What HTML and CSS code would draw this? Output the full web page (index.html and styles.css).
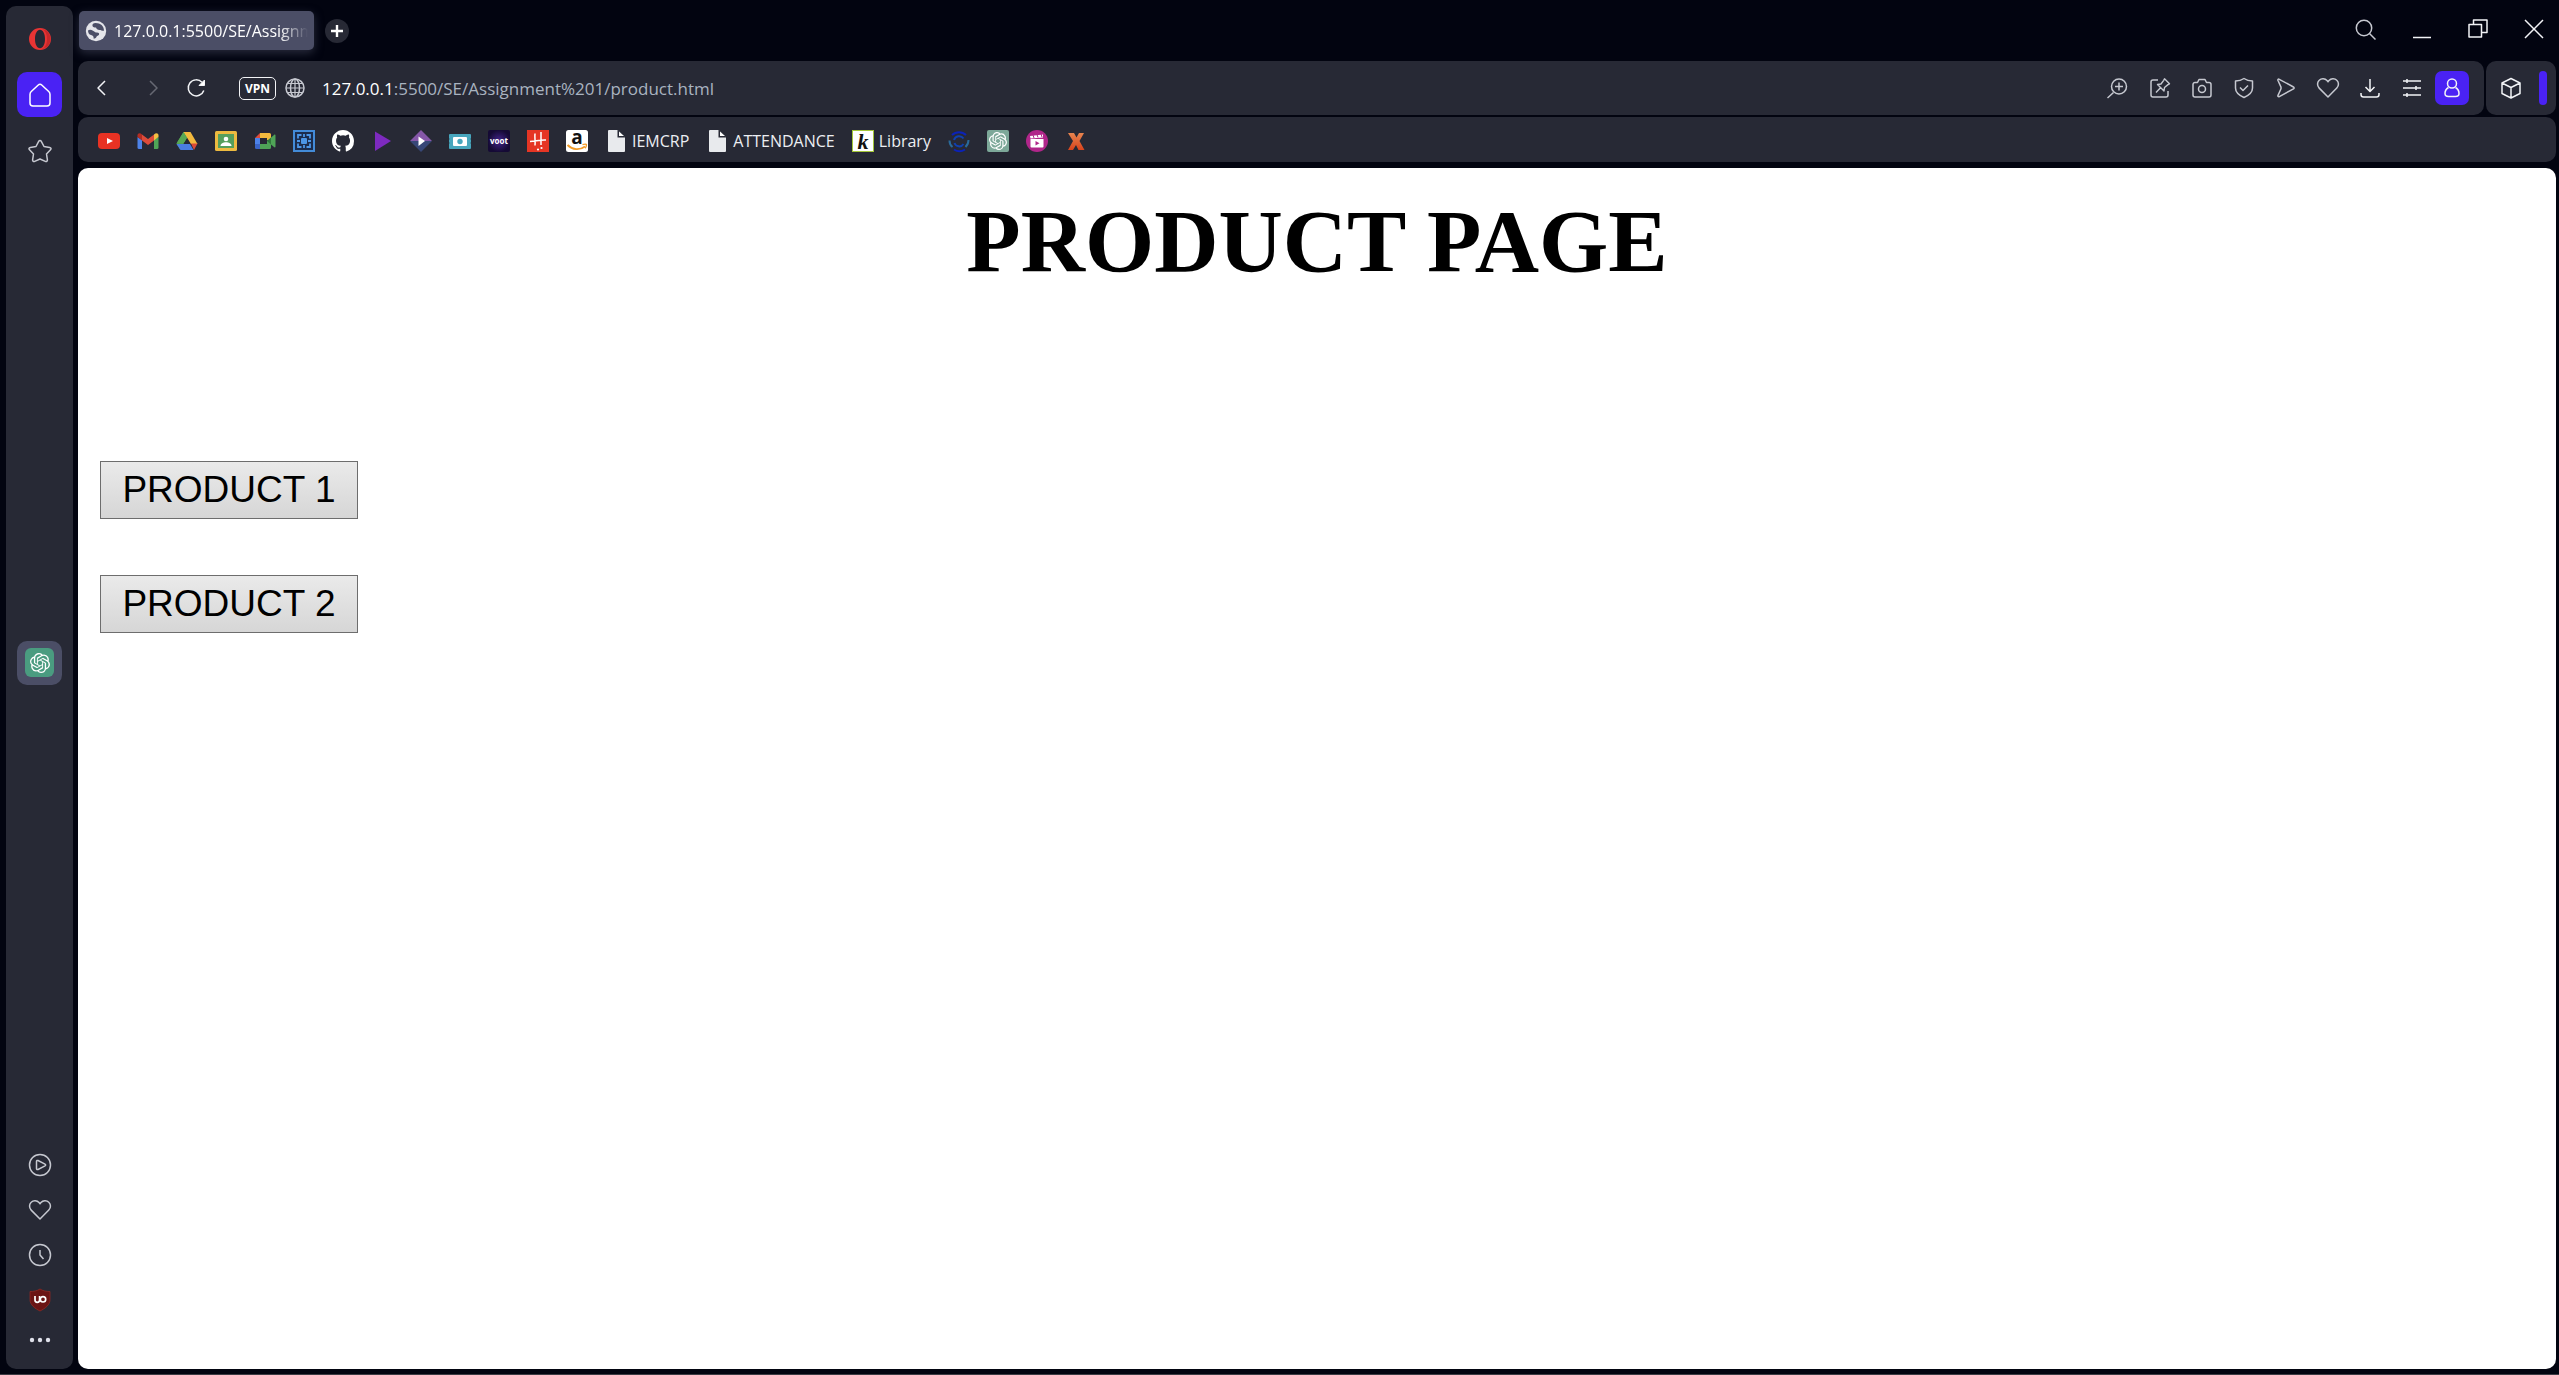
FILE: index.html
```html
<!DOCTYPE html>
<html lang="en">
<head>
<meta charset="utf-8">
<meta name="viewport" content="width=device-width, initial-scale=1">
<title>127.0.0.1:5500/SE/Assignment%201/product.html</title>
<link rel="stylesheet" href="styles.css">
</head>
<body>
<svg class="defs" aria-hidden="true">
  <defs>
    <symbol id="heart" viewBox="0 0 24 24"><path d="M12 21 3.200 12.100C1 9.800 1 6.200 3.200 4.200 5.500 2 9 2.300 11 4.600L12 5.800l1-1.200c2-2.300 5.500-2.600 7.800-.4 2.200 2 2.200 5.600 0 7.900z"/></symbol>
    <symbol id="knot" viewBox="0 0 24 24"><path fill="#fff" d="M22.2819 9.8211a5.9847 5.9847 0 0 0-.5157-4.9108 6.0462 6.0462 0 0 0-6.5098-2.9A6.0651 6.0651 0 0 0 4.9807 4.1818a5.9847 5.9847 0 0 0-3.9977 2.9 6.0462 6.0462 0 0 0 .7427 7.0966 5.98 5.98 0 0 0 .511 4.9107 6.051 6.051 0 0 0 6.5146 2.9001A5.9847 5.9847 0 0 0 13.2599 24a6.0557 6.0557 0 0 0 5.7718-4.2058 5.9894 5.9894 0 0 0 3.9977-2.9001 6.0557 6.0557 0 0 0-.7475-7.0729zm-9.022 12.6081a4.4755 4.4755 0 0 1-2.8764-1.0408l.1419-.0804 4.7783-2.7582a.7948.7948 0 0 0 .3927-.6813v-6.7369l2.02 1.1686a.071.071 0 0 1 .038.052v5.5826a4.504 4.504 0 0 1-4.4945 4.4944zm-9.6607-4.1254a4.4708 4.4708 0 0 1-.5346-3.0137l.142.0852 4.783 2.7582a.7712.7712 0 0 0 .7806 0l5.8428-3.3685v2.3324a.0804.0804 0 0 1-.0332.0615L9.74 19.9502a4.4992 4.4992 0 0 1-6.1408-1.6464zM2.3408 7.8956a4.485 4.485 0 0 1 2.3655-1.9728V11.6a.7664.7664 0 0 0 .3879.6765l5.8144 3.3543-2.0201 1.1685a.0757.0757 0 0 1-.071 0l-4.8303-2.7865A4.504 4.504 0 0 1 2.3408 7.872zm16.5963 3.8558L13.1038 8.364 15.1192 7.2a.0757.0757 0 0 1 .071 0l4.8303 2.7913a4.4944 4.4944 0 0 1-.6765 8.1042v-5.6772a.79.79 0 0 0-.407-.667zm2.0107-3.0231l-.142-.0852-4.7735-2.7818a.7759.7759 0 0 0-.7854 0L9.409 9.2297V6.8974a.0662.0662 0 0 1 .0284-.0615l4.8303-2.7866a4.4992 4.4992 0 0 1 6.6802 4.66zM8.3065 12.863l-2.02-1.1638a.0804.0804 0 0 1-.038-.0567V6.0742a4.4992 4.4992 0 0 1 7.3757-3.4537l-.142.0805L8.704 5.459a.7948.7948 0 0 0-.3927.6813zm1.0976-2.3654l2.602-1.4998 2.6069 1.4998v2.9994l-2.5974 1.4997-2.6067-1.4997Z"/></symbol>
    <symbol id="file" viewBox="0 0 22 22"><path d="M4 0h9l7 7v14a1 1 0 0 1-1 1H4a1 1 0 0 1-1-1V1a1 1 0 0 1 1-1z" fill="#e8eaed"/><path d="M12.500 0v7.500H20V6.500L13.500 0z" fill="#272935"/><path d="M14 1.500V6h5z" fill="#fff"/></symbol>
  </defs>
</svg>
<nav class="sidebar" aria-label="Sidebar">
  <div class="side-group">
    <button class="side-btn" aria-label="Opera menu"><svg class="ic22" viewBox="0 0 22 22"><path fill="#e93434" fill-rule="evenodd" d="M11 0a11 11 0 1 0 0 22 11 11 0 0 0 0-22zm0 1.800c3 0 5 4 5 9.200s-2 9.200-5 9.200-5-4-5-9.200 2-9.200 5-9.200z"/><path fill="#a81c22" d="M13 1c6 1 8.500 6 8.500 10S19 20 13 21c4-2 5-6 5-10s-1-8-5-10z" opacity=".5"/></svg></button>
    <button class="side-btn active" aria-label="Home"><svg class="ic26 line" viewBox="0 0 26 26"><path d="M3 12.500a4 4 0 0 1 1.300-3L11 3.200a3 3 0 0 1 4 0l6.700 6.300a4 4 0 0 1 1.300 3V21a3 3 0 0 1-3 3H6a3 3 0 0 1-3-3z"/></svg></button>
    <button class="side-btn" aria-label="Pinboards"><svg class="ic24 line" viewBox="0 0 24 24"><path d="M10.700 2.300c.6-1.100 2-1.100 2.600 0L16 7.500l5.700.9c1.300.2 1.700 1.500.8 2.400l-4 4.200.9 5.900c.1 1.200-1 2-2.100 1.500L12 20l-5.300 2.400c-1.100.5-2.200-.3-2.100-1.500l.9-5.900-4-4.200c-.9-.9-.5-2.200.8-2.400L8 7.500z"/></svg></button>
  </div>
  <button class="side-btn gpt" aria-label="ChatGPT"><span class="gpt-tile"><svg class="ic20"><use href="#knot"/></svg></span></button>
  <div class="side-group bottom">
    <button class="side-btn" aria-label="Player"><svg class="ic24 line" viewBox="0 0 24 24"><circle cx="12" cy="12" r="10.500"/><path d="M8.500 8.500c0-1 .8-1.300 1.500-1l7 3.600c.9.500.9 1.300 0 1.800l-7 3.600c-.7.300-1.500 0-1.500-1z"/></svg></button>
    <button class="side-btn" aria-label="Favourites"><svg class="ic24 line"><use href="#heart"/></svg></button>
    <button class="side-btn" aria-label="History"><svg class="ic24 line" viewBox="0 0 24 24"><circle cx="12" cy="12" r="10.500"/><path d="M12 7v5l3.500 4"/></svg></button>
    <button class="side-btn" aria-label="uBlock"><svg class="ic24" viewBox="0 0 24 24"><path fill="#6b1414" stroke="#9a2a22" stroke-width=".7" d="M12 1c3 2 6.500 2.500 10 2.500v8C22 17 17 20.500 12 23 7 20.500 2 17 2 11.500v-8C5.500 3.500 9 3 12 1z"/><g fill="none" stroke="#fff" stroke-width="1.700"><path d="M7 8v4a2.300 2.300 0 0 0 4.600 0V8"/><circle cx="15" cy="11.300" r="2.700"/></g></svg></button>
    <button class="side-btn more" aria-label="More"><svg class="ic24" viewBox="0 0 24 24"><g fill="#dfe1ea"><circle cx="4" cy="12" r="2.200"/><circle cx="12" cy="12" r="2.200"/><circle cx="20" cy="12" r="2.200"/></g></svg></button>
  </div>
</nav>
<div class="main">
  <header class="tabs">
    <button class="tab"><svg class="ic22" viewBox="0 0 22 22"><circle cx="11" cy="11" r="10.200" fill="#e4e5ea"/><path fill="#4b4e66" d="M10.500 3c-2 0-3.500 1.200-3 3 .4 1.500 2 1.500 3.500 1.500.5 1.500 1.500 2.500 3.500 2.500 1.500 0 2 .8 4.500.8C19 6 15.500 3 10.500 3zM3 10.500c1-.8 3-1 5 .2s2 1.800 4 1.800c1.500 0 2.500.8 2 2.200-.5 1-2 .8-2.500 2-.3 1-1.500 2-3 1.800.5-2-.5-3-2.500-3.500C4 14.500 3 12.800 3 10.500z"/></svg><span class="tab-title">127.0.0.1:5500/SE/Assignm</span></button>
    <button class="new-tab" aria-label="New tab"><svg class="ic12" viewBox="0 0 12 12"><path d="M6 0v12M0 6h12" stroke="#fff" stroke-width="2.400"/></svg></button>
    <div class="window-controls">
      <button aria-label="Search tabs"><svg class="ic22 line" viewBox="0 0 22 22"><circle cx="9" cy="10" r="7.700"/><path d="m14.500 15.500 6 6"/></svg></button>
      <button aria-label="Minimize"><svg class="ic22 line bright" viewBox="0 0 22 22"><path d="M2 19.500h18"/></svg></button>
      <button aria-label="Restore"><svg class="ic22 line bright" viewBox="0 0 22 22"><path d="M2 6.500h12.500V19H2zM6.500 6V2H20v12.500h-5"/></svg></button>
      <button aria-label="Close"><svg class="ic22 line bright" viewBox="0 0 22 22"><path d="m2 2 18 18M20 2 2 20"/></svg></button>
    </div>
  </header>
  <div class="toolbar">
    <div class="address-bar">
      <button class="nav-btn" aria-label="Back"><svg class="ic22 line bright" viewBox="0 0 22 22"><path d="M14 4 7 11l7 7"/></svg></button>
      <button class="nav-btn fwd" aria-label="Forward"><svg class="ic22 line" viewBox="0 0 22 22"><path d="m8 4 7 7-7 7"/></svg></button>
      <button class="nav-btn reload" aria-label="Reload"><svg class="ic22 line bright" viewBox="0 0 22 22"><path d="M18.800 13.500A8 8 0 1 1 17 5.300"/><path d="M19.500 3v5.500H14z" fill="#fff" stroke-width="1"/></svg></button>
      <button class="vpn">VPN</button>
      <svg class="ic22 line" viewBox="0 0 22 22"><circle cx="11" cy="11" r="9"/><ellipse cx="11" cy="11" rx="4.500" ry="9"/><path d="M2 11h18M3.500 6.500h15M3.500 15.500h15M11 2v18" stroke-width="1.200"/></svg>
      <div class="url" role="textbox" aria-label="Address" tabindex="0"><span class="host">127.0.0.1</span>:5500/SE/Assignment%201/product.html</div>
      <div class="actions">
        <button aria-label="Zoom"><svg class="ic22 line" viewBox="0 0 22 22"><circle cx="12" cy="9.500" r="7.500"/><path d="M12 5.500v8M8 9.500h8M6.500 15.500.5 21"/></svg></button>
        <button aria-label="Edit page"><svg class="ic22 line" viewBox="0 0 22 22"><path d="M9 3H4a2 2 0 0 0-2 2v13a2 2 0 0 0 2 2h13a2 2 0 0 0 2-2v-4"/><path d="m15.500 1.800 5 5-1.500.8-3.500 2.900-.5 3.500-6.500-6.500 3.500-.5 2.700-3.700zM11.500 10.800 7 15.500" stroke-width="1.400"/></svg></button>
        <button aria-label="Snapshot"><svg class="ic22 line" viewBox="0 0 22 22"><path d="M4 5.500h2.500L8 2.500h6l1.500 3H18a2 2 0 0 1 2 2V18a2 2 0 0 1-2 2H4a2 2 0 0 1-2-2V7.500a2 2 0 0 1 2-2z"/><circle cx="11" cy="12" r="3.500"/></svg></button>
        <button aria-label="Protection"><svg class="ic22 line" viewBox="0 0 22 22"><path d="M11 1.500c2.500 1.800 5 2.500 8.500 2.500v7c0 4.500-4 7.500-8.500 9.500-4.500-2-8.500-5-8.500-9.500V4C6 4 8.500 3.300 11 1.500z"/><path d="m7 10.500 3 3 5-5"/></svg></button>
        <button aria-label="My Flow"><svg class="ic22 line" viewBox="0 0 22 22"><path d="M3 3.500c-.4-1 .3-1.700 1.300-1.200L18.500 10c.8.400.8 1.400 0 1.800L4.300 19.600c-1 .5-1.700-.2-1.300-1.200l3-6.600v-1.700z"/></svg></button>
        <button aria-label="Bookmark"><svg class="ic24 line"><use href="#heart"/></svg></button>
        <button aria-label="Downloads"><svg class="ic22 line bright" viewBox="0 0 22 22"><path d="M11 2v12M6.500 10l4.500 4.500 4.500-4.500M2 16v1.500A2.500 2.500 0 0 0 4.500 20h13a2.500 2.500 0 0 0 2.500-2.500V16"/></svg></button>
        <button aria-label="Easy setup"><svg class="ic22 line bright" viewBox="0 0 22 22"><path d="M2 4h18M2 11h18M2 18h18M6 2v4M15 9v4M6 16v4"/></svg></button>
        <button class="profile" aria-label="Profile"><svg class="ic22 line bright" viewBox="0 0 22 22"><circle cx="11" cy="6.500" r="4.500"/><path d="M7.500 10.500C5 12 4 14 4 16.500c0 2 1.500 3 3.500 3h7c2 0 3.500-1 3.500-3 0-2.500-1-4.500-3.500-6"/></svg></button>
      </div>
    </div>
    <div class="extensions">
      <button aria-label="Extensions"><svg class="ic22 line bright" viewBox="0 0 22 22"><path d="m11 1.500 9 4.500v10.500l-9 4.500-9-4.500V6zM2 6l9 4.500L20 6M11 10.500V21"/></svg></button>
      <span class="accent"></span>
    </div>
  </div>
  <nav class="bookmarks" aria-label="Bookmarks">
    <a href="#" aria-label="YouTube"><svg viewBox="0 0 22 22"><rect y="3" width="22" height="16" rx="4" fill="#e93223"/><path d="m9 8 6 3-6 3z" fill="#fff"/></svg></a>
    <a href="#" aria-label="Gmail"><svg viewBox="0 0 22 22"><path fill="#4d82e8" d="M.5 7 5 10v9H2a1.500 1.500 0 0 1-1.500-1.500z"/><path fill="#4fa457" d="M21.500 7 17 10v9h3a1.500 1.500 0 0 0 1.500-1.500z"/><path fill="#dd4b3a" d="M5 4.500 11 9l6-4.500v6L11 15l-6-4.500z"/><path fill="#b32d22" d="M.5 5.500C.5 3.300 3 2.500 5 4.500v6L.5 7z"/><path fill="#f4bf42" d="M21.500 5.500c0-2.200-2.500-3-4.500-1v6L21.500 7z"/></svg></a>
    <a href="#" aria-label="Drive"><svg viewBox="0 0 22 22"><path fill="#4d9e4d" d="M7.500 2h4L13 4.500 4 19.500.5 13.500z"/><path fill="#f3b93d" d="M7.500 2h7L21.500 14H15z"/><path fill="#58a854" d="M7.500 2 11 8l-3.500 5.500H.5z"/><path fill="#4a7de0" d="M4 14h10l3.500 6H4.500L.5 14z"/><path fill="#db4a38" d="M15 13.500h6.500L18 20z"/><path fill="#272935" d="m11 8.500 3.200 5.500H7.800z"/></svg></a>
    <a href="#" aria-label="Classroom"><svg viewBox="0 0 22 22"><rect y="1" width="22" height="20" rx="1.500" fill="#edba40"/><rect x="3" y="4" width="16" height="14" fill="#569f5c"/><circle cx="11" cy="9" r="2.300" fill="#fff"/><path d="M5.500 16c0-5 11-5 11 0z" fill="#fff"/></svg></a>
    <a href="#" aria-label="Meet"><svg viewBox="0 0 22 22"><path fill="#dd4b3a" d="M6 3v5H1z"/><path fill="#4d82e8" d="M1 8h5v6H1z"/><path fill="#3a64c8" d="M1 14h5v5H2.500A1.500 1.500 0 0 1 1 17.500z"/><path fill="#f3bb3e" d="M6 3h9.500A1.500 1.500 0 0 1 17 4.500V11l-4-1V8H6z"/><path fill="#4fa457" d="M6 14h7v-3l7-6c1-.8 1.500-.4 1.500.5v11c0 1-.7 1.300-1.500.5l-3-2.500v3a1.500 1.500 0 0 1-1.500 1.500H6z"/><path fill="#2f7a3a" d="m13 11 4-3.500v7z"/></svg></a>
    <a href="#" aria-label="Scanner"><svg viewBox="0 0 22 22"><rect width="22" height="22" fill="#438bd8"/><rect x="2" y="2" width="18" height="18" fill="#1c2c4c"/><g fill="none" stroke="#4c96e6" stroke-width="1.800"><path d="M5 8.500V5h3.500M13.500 5H17v3.500M17 13.500V17h-3.500M8.500 17H5v-3.500M11 4v3M11 15v3M4 11h3M15 11h3"/></g><rect x="8" y="8" width="6" height="6" rx="1" fill="#4c96e6"/></svg></a>
    <a href="#" aria-label="GitHub"><svg viewBox="0 0 16 16"><path fill="#fff" d="M8 0C3.580 0 0 3.580 0 8c0 3.540 2.290 6.530 5.470 7.590.4.070.55-.17.55-.38v-1.490c-2.010.37-2.530-.49-2.690-.94-.09-.23-.48-.94-.82-1.130-.28-.15-.68-.52-.01-.53.630-.01 1.080.58 1.230.82.72 1.210 1.870.87 2.330.66.070-.52.280-.87.510-1.070-1.780-.2-3.640-.89-3.640-3.950 0-.87.310-1.590.82-2.150-.08-.2-.36-1.020.08-2.120 0 0 .67-.21 2.200.82a7.600 7.600 0 0 1 4 0c1.530-1.040 2.200-.82 2.200-.82.44 1.100.16 1.920.08 2.120.51.560.82 1.270.82 2.150 0 3.070-1.870 3.750-3.650 3.950.29.250.54.730.54 1.480v2.200c0 .21.150.46.550.38A8 8 0 0 0 16 8c0-4.420-3.580-8-8-8z"/></svg></a>
    <a href="#" aria-label="Player"><svg viewBox="0 0 22 22"><path fill="#7d2abf" d="m4 1.500 16 9.500L4 21z"/></svg></a>
    <a href="#" aria-label="Streaming"><svg viewBox="0 0 22 22"><path fill="#8557a8" d="m11 0 11 11H0z"/><path fill="#374777" d="m11 22 11-11H0z"/><path fill="#fff" d="m8.500 6.500 6.500 4.500-6.500 5z"/></svg></a>
    <a href="#" aria-label="Tickets"><svg viewBox="0 0 22 22"><path fill="#47a6bd" d="M1 4h20a1 1 0 0 1 1 1v3a1.500 1.500 0 0 0 0 2v2a1.500 1.500 0 0 0 0 2v4a1 1 0 0 1-1 1H1a1 1 0 0 1-1-1v-4a1.500 1.500 0 0 0 0-2v-2a1.500 1.500 0 0 0 0-2V5a1 1 0 0 1 1-1z"/><rect x="4" y="7" width="14" height="9" rx="1" fill="#fff"/><circle cx="11" cy="11.500" r="2.700" fill="#47a6bd"/></svg></a>
    <a href="#" aria-label="Voot"><svg viewBox="0 0 22 22"><defs><radialGradient id="voot"><stop offset="0" stop-color="#43248c"/><stop offset="1" stop-color="#150a35"/></radialGradient></defs><rect width="22" height="22" rx="2" fill="url(#voot)"/><text class="t-voot" x="11" y="14">voot</text></svg></a>
    <a href="#" aria-label="Hungama"><svg viewBox="0 0 22 22"><rect width="22" height="22" fill="#e53524"/><path d="M8 3.500c-.5 4 .5 8 0 12M14 2v13M3 11.500c5 0 10-2 16-1.500" fill="none" stroke="#fff" stroke-width="1.500"/><circle cx="11" cy="19.500" r="1.100" fill="#fff"/><circle cx="14.500" cy="18" r="1.100" fill="#fff"/></svg></a>
    <a href="#" aria-label="Amazon"><svg viewBox="0 0 22 22"><rect width="22" height="22" rx="2.500" fill="#fff"/><text class="t-amazon" x="11" y="14">a</text><path d="M1.500 15c5 5 12 5.500 17.500 1.500" fill="none" stroke="#f29b27" stroke-width="1.800"/><path d="M16.500 14.700c2-.7 4-.7 4 0s-.5 2.500-1.500 3.500" fill="none" stroke="#f29b27" stroke-width="1.300"/></svg></a>
    <a href="#"><svg><use href="#file"/></svg><span>IEMCRP</span></a>
    <a href="#"><svg><use href="#file"/></svg><span>ATTENDANCE</span></a>
    <a href="#"><svg viewBox="0 0 22 22"><rect width="22" height="22" fill="#a4c639"/><rect x="1" y="1" width="20" height="20" fill="#fff"/><text class="t-koha" x="11" y="19">k</text></svg><span>Library</span></a>
    <a href="#" aria-label="Circle"><svg viewBox="0 0 22 22"><g fill="none" stroke-width="2"><path d="M4 5a10 10 0 0 1 14 0M6 19.500a10 10 0 0 0 11 0" stroke="#0b22b8"/><path d="M1.500 10.500c0 3 1 5 3 6.500M20.500 10c0 3-1 5-3 7" stroke="#2a6a9a"/><path d="M6 10a5.300 5.300 0 0 1 9.500-1.500M6.500 13a5 5 0 0 0 9 1" stroke="#1040b0"/></g></svg></a>
    <a href="#" aria-label="ChatGPT"><svg viewBox="0 0 22 22"><rect width="22" height="22" rx="2" fill="#7da899"/><use href="#knot" x="2" y="2" width="18" height="18"/></svg></a>
    <a href="#" aria-label="Movies"><svg viewBox="0 0 22 22"><circle cx="11" cy="11" r="11" fill="#b0268a"/><path fill="#fff" d="M4.500 9h13v7.500a1 1 0 0 1-1 1h-11a1 1 0 0 1-1-1zM4 6l13-1.500V7.500L4.500 8.500z"/><path d="m7 5 1 3M11 4.500l1 3M15 4l1 3" stroke="#b0268a"/><path fill="#b0268a" d="m9.500 11 4 2.300-4 2.200z"/></svg></a>
    <a href="#" aria-label="X"><svg viewBox="0 0 22 22"><defs><linearGradient id="xg" x2="0" y2="1"><stop stop-color="#e8854f"/><stop offset="1" stop-color="#d8431c"/></linearGradient></defs><path fill="url(#xg)" d="M3 3h6l2.500 4.500L14 3h5l-4.500 8 5 9h-6L11 15l-3 5H3l5-9z"/></svg></a>
  </nav>
  <main class="page">
    <h1>PRODUCT PAGE</h1>
    <div class="products">
      <button class="product">PRODUCT 1</button>
      <button class="product">PRODUCT 2</button>
    </div>
  </main>
</div>
</body>
</html>
```
FILE: styles.css
```css
* { box-sizing: border-box; }

body {
  margin: 0;
  min-height: 100vh;
  display: grid;
  grid-template-columns: 67px 1fr;
  gap: 5px;
  padding: 0 3px 5px 6px;
  border-bottom: 1px solid #3c3c44;
  background: #020410;
  color: #e8eaf0;
  font-family: "Open Sans", "Noto Sans", sans-serif;
  font-size: 17px;
}

button {
  margin: 0;
  padding: 0;
  border: 0;
  background: none;
  color: inherit;
  font: inherit;
  display: flex;
  align-items: center;
  justify-content: center;
}

svg { display: block; flex: none; }
.defs { position: absolute; width: 0; height: 0; }
.ic12 { width: 12px; height: 12px; }
.ic20 { width: 20px; height: 20px; }
.ic22 { width: 22px; height: 22px; }
.ic24 { width: 24px; height: 24px; }
.ic26 { width: 26px; height: 26px; }

.line {
  fill: none;
  stroke: #c6c8d0;
  stroke-width: 1.5;
  stroke-linejoin: round;
}
.bright { stroke: #f2f3f6; }

/* Sidebar */
.sidebar {
  display: flex;
  flex-direction: column;
  align-items: center;
  margin-top: 6px;
  padding: 10px 0 12px;
  border-radius: 10px;
  background: #272935;
}
.side-group { flex: 1; display: flex; flex-direction: column; gap: 11px; }
.side-group.bottom { gap: 0; justify-content: flex-end; }
.side-btn { width: 45px; height: 45px; border-radius: 10px; }
.side-btn.more { height: 35px; }
.side-btn.active { background: #4a22f4; }
.side-btn.active .line { stroke: #fff; }
.side-btn.gpt { height: 44px; margin-bottom: 46px; margin-top: 0; background: #4b4e66; }
.sidebar .gpt { margin: 0; }
.gpt-tile {
  display: grid;
  place-items: center;
  width: 29px;
  height: 29px;
  border-radius: 6px;
  background: #4a9c80;
}
.side-group:first-child { flex-basis: 0; }
.side-group.bottom { flex-basis: 48px; }

/* Tab strip */
.main { display: flex; flex-direction: column; min-width: 0; }
.tabs { display: flex; align-items: center; height: 61px; padding-left: 1px; }
.tab {
  justify-content: flex-start;
  gap: 7px;
  width: 235px;
  height: 39px;
  padding: 0 6px;
  border-radius: 5px;
  background: #4b4e66;
  box-shadow: 0 3px 10px #4b4e6688;
  color: #fff;
  font-size: 16px;
}
.tab-title {
  flex: 1;
  overflow: hidden;
  white-space: nowrap;
  text-align: left;
  mask-image: linear-gradient(to right, #000 85%, transparent);
}
.new-tab {
  width: 24px;
  height: 24px;
  margin-left: 11px;
  border-radius: 50%;
  background: #272935;
}
.window-controls { display: flex; margin: 0 0 3px auto; }
.window-controls button { width: 56px; height: 40px; }
.window-controls button:last-child { margin-right: -6px; }

/* Address bar */
.toolbar { display: flex; gap: 2px; height: 54px; }
.address-bar {
  flex: 1;
  display: flex;
  align-items: center;
  padding: 0 15px 0 1px;
  border-radius: 10px;
  background: #272935;
}
.nav-btn { width: 46px; height: 40px; }
.nav-btn.fwd { width: 56px; opacity: .4; }
.nav-btn.reload { width: 30px; }
.vpn {
  width: 37px;
  height: 23px;
  margin: 0 8px 0 28px;
  border: 1px solid #f2f3f6;
  border-radius: 5px;
  font-size: 12px;
  font-weight: 700;
  color: #fff;
}
.url {
  flex: 1;
  margin-left: 16px;
  white-space: nowrap;
  color: #a9b3c0;
}
.host { color: #fff; }
.actions { display: flex; align-items: center; }
.actions button { width: 42px; height: 34px; }
.actions .profile {
  width: 34px;
  margin-left: 2px;
  border-radius: 7px;
  background: #4a22f4;
}
.extensions {
  display: flex;
  align-items: center;
  justify-content: space-between;
  width: 70px;
  padding: 0 9px 0 14px;
  border-radius: 10px;
  background: #272935;
}
.accent { width: 8px; height: 34px; border-radius: 4px; background: #4a22f4; }

/* Bookmarks */
.bookmarks {
  display: flex;
  align-items: center;
  gap: 17px;
  height: 45px;
  margin: 2px 0 6px;
  padding: 2px 20px 0;
  border-radius: 10px;
  background: #272935;
  font-size: 16px;
}
.bookmarks a {
  display: flex;
  align-items: center;
  gap: 5px;
  color: #eceef2;
  text-decoration: none;
}
.bookmarks svg { width: 22px; height: 22px; overflow: visible; }
.t-voot {
  font: 700 8px "Open Sans", sans-serif;
  text-anchor: middle;
  fill: #fff;
}
.t-amazon {
  font: 700 19px "Open Sans", sans-serif;
  text-anchor: middle;
  fill: #111;
}
.t-koha {
  font: italic 700 22px "Liberation Serif", serif;
  text-anchor: middle;
  fill: #111;
}

/* Page */
.page {
  flex: 1;
  padding: 22px;
  border-radius: 10px;
  background: #fff;
  color: #000;
}
h1 {
  margin: 0;
  font: 700 89px/102px "Liberation Serif", "Times New Roman", serif;
  text-align: center;
}
.products {
  display: flex;
  flex-direction: column;
  align-items: flex-start;
  gap: 56px;
  margin-top: 169px;
}
.product {
  min-width: 258px;
  height: 58px;
  padding: 0 21px;
  border: 1px solid #6d6d6d;
  background: linear-gradient(#eaeaea, #d6d6d6);
  font: 37px "Liberation Sans", Arial, sans-serif;
  color: #000;
}
```
